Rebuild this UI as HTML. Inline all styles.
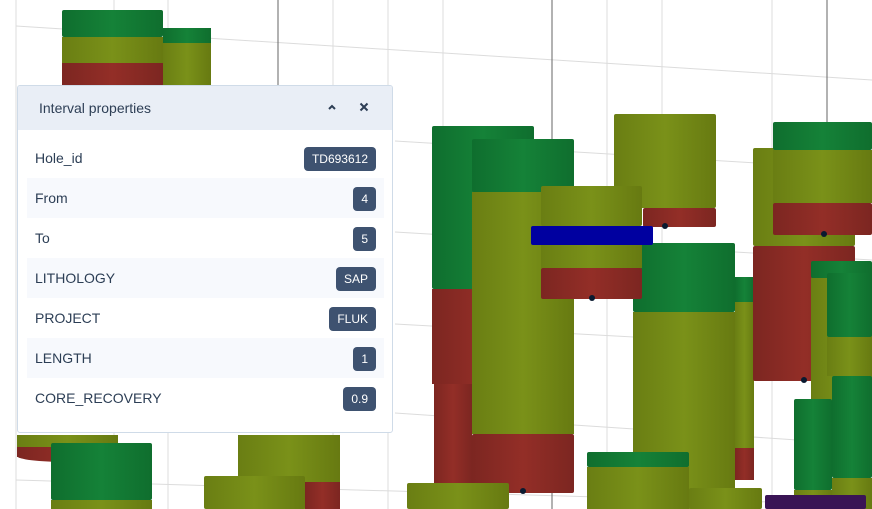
<!DOCTYPE html>
<html><head><meta charset="utf-8"><style>
*{margin:0;padding:0;box-sizing:border-box}
body{width:872px;height:509px;overflow:hidden;background:#fff;font-family:"Liberation Sans",Arial,sans-serif;position:relative}
svg{position:absolute;left:0;top:0}
.panel{position:absolute;left:17px;top:85px;width:376px;height:348px;background:#fff;border:1px solid #cfdbe8;border-radius:3px;overflow:hidden}
.hd{height:44px;background:#e9eef6;position:relative;color:#2d3e55;font-size:14px;line-height:44px;padding-left:21px}
.hd svg{position:absolute}
.row{position:absolute;left:9px;width:357px;height:40px;line-height:41px;font-size:14px;color:#2c3e55;padding-left:8px}
.row.s{background:#f7f9fd}
.b{position:absolute;right:8px;top:9px;height:24px;line-height:24px;background:#3e5270;color:#fff;font-size:12px;border-radius:4px;padding:0 8px}
</style></head><body>
<svg width="872" height="509" viewBox="0 0 872 509">
<defs>
<linearGradient id="g" x1="0" x2="1"><stop offset="0" stop-color="#0f6e2e"/><stop offset=".5" stop-color="#158238"/><stop offset="1" stop-color="#0f6e2e"/></linearGradient>
<linearGradient id="o" x1="0" x2="1"><stop offset="0" stop-color="#6a7e13"/><stop offset=".5" stop-color="#7a9119"/><stop offset="1" stop-color="#677a11"/></linearGradient>
<linearGradient id="r" x1="0" x2="1"><stop offset="0" stop-color="#7c2621"/><stop offset=".5" stop-color="#932e27"/><stop offset="1" stop-color="#7c2621"/></linearGradient>
</defs>
<g stroke="#dcdcdc" stroke-width="1">
<line x1="16" y1="0" x2="16" y2="509"/><line x1="114" y1="0" x2="114" y2="509"/><line x1="168" y1="0" x2="168" y2="509"/>
<line x1="333" y1="0" x2="333" y2="509"/><line x1="388" y1="0" x2="388" y2="509"/><line x1="443" y1="0" x2="443" y2="509"/>
<line x1="607" y1="0" x2="607" y2="509"/><line x1="662" y1="0" x2="662" y2="509"/><line x1="772" y1="0" x2="772" y2="509"/>
<line x1="16" y1="26" x2="872" y2="80"/><line x1="395" y1="141" x2="872" y2="170"/><line x1="395" y1="232" x2="872" y2="260"/>
<line x1="395" y1="324" x2="872" y2="350"/><line x1="395" y1="413" x2="872" y2="445"/><line x1="16" y1="480" x2="872" y2="505"/>
</g>
<g stroke="#666" stroke-width="1"><line x1="278" y1="0" x2="278" y2="85"/><line x1="552" y1="0" x2="552" y2="509"/><line x1="827" y1="0" x2="827" y2="130"/></g>
<rect x="163" y="28" width="48" height="15" fill="url(#g)"/><rect x="163" y="43" width="48" height="42" fill="url(#o)"/>
<rect x="62" y="10" width="101" height="27" rx="2" fill="url(#g)"/><rect x="62" y="37" width="101" height="26" fill="url(#o)"/><rect x="62" y="63" width="101" height="22" fill="url(#r)"/>
<rect x="17" y="435" width="101" height="12" fill="url(#o)"/><rect x="17" y="447" width="101" height="10" fill="url(#r)"/><ellipse cx="67" cy="456" rx="50" ry="6" fill="url(#r)"/>
<rect x="51" y="443" width="101" height="57" rx="2" fill="url(#g)"/><rect x="51" y="500" width="101" height="9" fill="url(#o)"/>
<rect x="238" y="435" width="102" height="74" fill="url(#o)"/><rect x="305" y="482" width="35" height="27" fill="url(#r)"/>
<rect x="204" y="476" width="101" height="33" rx="2" fill="url(#o)"/>
<rect x="434" y="384" width="38" height="101" fill="url(#r)"/>
<rect x="432" y="126" width="102" height="163" rx="2" fill="url(#g)"/><rect x="432" y="289" width="102" height="95" fill="url(#r)"/>
<rect x="472" y="139" width="102" height="53" rx="2" fill="url(#g)"/><rect x="472" y="192" width="102" height="242" fill="url(#o)"/><rect x="472" y="434" width="102" height="59" rx="2" fill="url(#r)"/>
<circle cx="523" cy="491" r="3" fill="#0a1a30"/>
<rect x="614" y="114" width="102" height="94" rx="2" fill="url(#o)"/><rect x="643" y="208" width="73" height="19" rx="2" fill="url(#r)"/>
<circle cx="665" cy="226" r="3" fill="#0a1a30"/>
<rect x="735" y="277" width="19" height="25" fill="url(#g)"/><rect x="735" y="302" width="19" height="146" fill="url(#o)"/><rect x="735" y="448" width="19" height="32" fill="url(#r)"/>
<rect x="633" y="243" width="102" height="69" rx="2" fill="url(#g)"/><rect x="633" y="312" width="102" height="197" fill="url(#o)"/>
<rect x="541" y="186" width="101" height="40" rx="2" fill="url(#o)"/>
<rect x="531" y="226" width="122" height="19" rx="2" fill="#0000a0"/>
<rect x="541" y="245" width="101" height="23" fill="url(#o)"/><rect x="541" y="268" width="101" height="31" rx="2" fill="url(#r)"/>
<circle cx="592" cy="298" r="3" fill="#0a1a30"/>
<rect x="753" y="148" width="102" height="98" rx="2" fill="url(#o)"/><rect x="753" y="246" width="102" height="135" rx="2" fill="url(#r)"/>
<circle cx="804" cy="380" r="3" fill="#0a1a30"/>
<rect x="773" y="122" width="99" height="28" rx="2" fill="url(#g)"/><rect x="773" y="150" width="99" height="53" fill="url(#o)"/><rect x="773" y="203" width="99" height="32" rx="2" fill="url(#r)"/>
<circle cx="824" cy="234" r="3" fill="#0a1a30"/>
<rect x="811" y="261" width="61" height="17" rx="2" fill="url(#g)"/><rect x="811" y="278" width="61" height="130" fill="url(#o)"/>
<rect x="827" y="273" width="45" height="64" rx="2" fill="url(#g)"/><rect x="827" y="337" width="45" height="39" fill="url(#o)"/>
<rect x="794" y="399" width="38" height="91" rx="2" fill="url(#g)"/><rect x="794" y="490" width="38" height="6" fill="url(#o)"/>
<rect x="832" y="376" width="40" height="102" rx="2" fill="url(#g)"/><rect x="832" y="478" width="40" height="31" fill="url(#o)"/>
<rect x="407" y="483" width="102" height="26" rx="2" fill="url(#o)"/>
<rect x="689" y="488" width="73" height="21" rx="2" fill="url(#o)"/>
<rect x="587" y="452" width="102" height="15" rx="2" fill="url(#g)"/><rect x="587" y="467" width="102" height="42" fill="url(#o)"/>
<rect x="765" y="495" width="101" height="14" rx="2" fill="#3a1455"/>
</svg>
<div class="panel">
<div class="hd">Interval properties
<svg width="12" height="12" style="left:308px;top:15px" viewBox="0 0 12 12"><path d="M3 8 L6 5 L9 8" fill="none" stroke="#2d3e55" stroke-width="2"/></svg>
<svg width="12" height="12" style="left:340px;top:15px" viewBox="0 0 12 12"><path d="M2.5 2.5 L9.5 9.5 M9.5 2.5 L2.5 9.5" fill="none" stroke="#2d3e55" stroke-width="2"/></svg>
</div>
<div class="row" style="top:52px">Hole_id<span class="b">TD693612</span></div>
<div class="row s" style="top:92px">From<span class="b">4</span></div>
<div class="row" style="top:132px">To<span class="b">5</span></div>
<div class="row s" style="top:172px">LITHOLOGY<span class="b">SAP</span></div>
<div class="row" style="top:212px">PROJECT<span class="b">FLUK</span></div>
<div class="row s" style="top:252px">LENGTH<span class="b">1</span></div>
<div class="row" style="top:292px">CORE_RECOVERY<span class="b">0.9</span></div>
</div>
</body></html>
